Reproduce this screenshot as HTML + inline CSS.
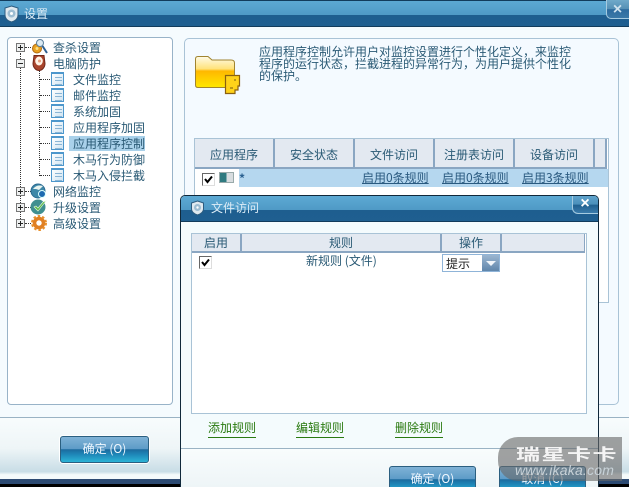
<!DOCTYPE html>
<html><head><meta charset="utf-8">
<style>
html,body{margin:0;padding:0;width:629px;height:487px;overflow:hidden;background:#000}
*{box-sizing:border-box}
body{position:relative;font:12px/14px "WenQuanYi Zen Hei","Noto Sans CJK SC",sans-serif;color:#2a5a75}
.a{position:absolute}
.t{position:absolute;white-space:nowrap;line-height:14px;font-size:12px}
.title{background:linear-gradient(#5ca9d3 0,#4f9ac6 55%,#1e5e8f 56%,#1f5f90 100%)}
.ic{position:absolute;width:13px;height:14px;background:linear-gradient(135deg,#fff,#cfe4f2);border:1px solid #4d97cc;border-top-width:2px}
.ic:after{content:"";position:absolute;left:3px;top:3px;width:7px;height:6px;border-top:1px solid #8ab5d5;border-bottom:1px solid #8ab5d5;background:linear-gradient(transparent 2px,#8ab5d5 2px,#8ab5d5 3px,transparent 3px)}
.pm{position:absolute;left:16px;width:9px;height:9px;border:1px solid #777;background:#eef0f0}
.pm:before{content:"";position:absolute;left:1px;top:3px;width:5px;height:1px;background:#222}
.pm.p:after{content:"";position:absolute;left:3px;top:1px;width:1px;height:5px;background:#222}
.dh{position:absolute;height:0;border-top:1px dotted #333}
.dv{position:absolute;width:0;border-left:1px dotted #333}
.h{position:absolute;height:29px;border-right:2px solid #8aa6c2;text-align:center;line-height:31px;font-size:12px}
.btn{position:absolute;border:1px solid #2b5f80;border-radius:3px;color:#f0f8ff;text-align:center;line-height:24px;font-size:12px;background:linear-gradient(#7fb2d6 0,#5d9bc7 48%,#1b6a9e 50%,#1e87b8 70%,#2db4d6 100%);box-shadow:0 0 0 1px #fff}
.lk{text-decoration:underline;color:#2a5a80}
.gr{position:absolute;color:#2a7a10;border-bottom:1px solid #2a7a10;height:18px;white-space:nowrap;line-height:15px}
.x{position:absolute;color:#fff;font:bold 16px/14px "Liberation Sans",sans-serif;text-align:center}
.cb{position:absolute;width:13px;height:13px;border:1px solid #666;border-right-color:#ddd;border-bottom-color:#ddd;background:#fff}
</style></head><body>

<!-- main window -->
<div class="a" style="left:0;top:0;width:629px;height:479px;background:#f5fbfe"></div>
<div class="a title" style="left:0;top:0;width:629px;height:27px;border-top:1px solid #123c5c;border-bottom:1px solid #123c5c"></div>
<svg class="a" style="left:3px;top:5px" width="17" height="18" viewBox="0 0 17 18"><path d="M8.500 1L15 3v7c0 4-3 6-6.500 7C5 16 2 14 2 10V3z" fill="#dfe9ef" stroke="#2c5c80"/><circle cx="8.500" cy="8.500" r="4" fill="#9dbdd2"/><circle cx="8.500" cy="8.500" r="1.500" fill="#fff"/></svg>
<div class="t" style="left:24px;top:7px;color:#dcecf6">设置</div>
<div class="a" style="left:606px;top:0;width:23px;height:19px;background:linear-gradient(#6fa9c9 0,#5590b5 50%,#2d6b9e 52%,#3b79a8 100%);border-left:1px solid #a5cbe0;border-bottom:1px solid #a5cbe0;border-bottom-left-radius:5px"></div>
<div class="x" style="left:606px;top:3px;width:23px;color:#cfe2ee">×</div>

<!-- tree panel -->
<div class="a" style="left:7px;top:37px;width:166px;height:368px;background:#fff;border:1px solid #98b3c8;border-radius:4px"></div>
<div class="dv" style="left:20px;top:53px;height:170px"></div>
<div class="dv" style="left:39px;top:70px;height:106px"></div>
<div class="dh" style="left:25px;top:47px;width:6px"></div>
<div class="dh" style="left:25px;top:191px;width:6px"></div>
<div class="dh" style="left:25px;top:207px;width:6px"></div>
<div class="dh" style="left:25px;top:223px;width:6px"></div>
<div class="dh" style="left:40px;top:79px;width:10px"></div>
<div class="dh" style="left:40px;top:95px;width:10px"></div>
<div class="dh" style="left:40px;top:111px;width:10px"></div>
<div class="dh" style="left:40px;top:127px;width:10px"></div>
<div class="dh" style="left:40px;top:143px;width:10px"></div>
<div class="dh" style="left:40px;top:159px;width:10px"></div>
<div class="dh" style="left:40px;top:175px;width:10px"></div>
<div class="pm p" style="top:43px"></div>
<div class="pm" style="top:59px"></div>
<div class="pm p" style="top:187px"></div>
<div class="pm p" style="top:203px"></div>
<div class="pm p" style="top:219px"></div>

<svg class="a" style="left:30px;top:38px" width="18" height="17" viewBox="0 0 18 17"><circle cx="7" cy="10.500" r="4.500" fill="#e8a020" stroke="#b06a10"/><circle cx="7" cy="10.500" r="1.500" fill="#ffe080"/><circle cx="10" cy="5" r="3.500" fill="#dceaf2" stroke="#5b7f9c"/><path d="M12.500 8l4.500 7" stroke="#2d5f90" stroke-width="2"/></svg>
<svg class="a" style="left:31px;top:54px" width="16" height="18" viewBox="0 0 16 18"><path d="M3 1.500h10l1 8c0 4-3 7-6 7s-6-3-6-7z" fill="#a8442c" stroke="#70281a"/><ellipse cx="8" cy="7" rx="3.800" ry="4.500" fill="#fff3e6"/><circle cx="8.500" cy="7" r="1.500" fill="#e8a080"/></svg>
<svg class="a" style="left:30px;top:182px" width="18" height="18" viewBox="0 0 18 18"><circle cx="8" cy="9" r="7" fill="#3f88a8" stroke="#2a6a90"/><path d="M3 7c3-4 7-4 10-3l-4 4-3-1z" fill="#e8f4f0"/><circle cx="12" cy="12" r="3.500" fill="#1e6ab0" stroke="#dff"/></svg>
<svg class="a" style="left:30px;top:198px" width="18" height="18" viewBox="0 0 18 18"><circle cx="8" cy="9" r="7.500" fill="#3f8f90"/><path d="M4 9l4 4 8-10-3 1-5 6-2-2z" fill="#58b848" stroke="#e8f8e0" stroke-width=".6"/></svg>
<svg class="a" style="left:31px;top:214px" width="17" height="18" viewBox="0 0 17 18"><circle cx="8" cy="9" r="4.500" fill="none" stroke="#e08024" stroke-width="3.600"/><circle cx="8" cy="9" r="7" fill="none" stroke="#e8902c" stroke-width="2" stroke-dasharray="2.500 2"/></svg>

<div class="ic" style="left:51px;top:72px"></div>
<div class="ic" style="left:51px;top:88px"></div>
<div class="ic" style="left:51px;top:104px"></div>
<div class="ic" style="left:51px;top:120px"></div>
<div class="ic" style="left:51px;top:136px"></div>
<div class="ic" style="left:51px;top:152px"></div>
<div class="ic" style="left:51px;top:168px"></div>

<div class="t" style="left:53px;top:41px">查杀设置</div>
<div class="t" style="left:53px;top:57px">电脑防护</div>
<div class="t" style="left:73px;top:73px">文件监控</div>
<div class="t" style="left:73px;top:89px">邮件监控</div>
<div class="t" style="left:73px;top:105px">系统加固</div>
<div class="t" style="left:73px;top:121px">应用程序加固</div>
<div class="a" style="left:69px;top:136px;width:76px;height:15px;background:#a9d1ea"></div>
<div class="t" style="left:73px;top:137px">应用程序控制</div>
<div class="t" style="left:73px;top:153px">木马行为防御</div>
<div class="t" style="left:73px;top:169px">木马入侵拦截</div>
<div class="t" style="left:53px;top:185px">网络监控</div>
<div class="t" style="left:53px;top:201px">升级设置</div>
<div class="t" style="left:53px;top:217px">高级设置</div>

<!-- right panel -->
<div class="a" style="left:184px;top:38px;width:435px;height:367px;background:#f4faff;border:1px solid #a9c3d6;border-radius:5px"></div>
<svg class="a" style="left:194px;top:55px" width="48" height="41" viewBox="0 0 48 41"><defs><linearGradient id="f" x1="0" y1="0" x2="0" y2="1"><stop offset="0" stop-color="#fffbe8"/><stop offset=".4" stop-color="#ffe27a"/><stop offset=".47" stop-color="#ffb800"/><stop offset="1" stop-color="#ffe800"/></linearGradient></defs><path d="M1.500 4Q1.500 1.500 4 1.500H14L18 5H37Q40.500 5 40.500 8V31Q40.500 32.500 38 32.500H4Q1.500 32.500 1.500 30z" fill="url(#f)" stroke="#a08430"/><path d="M31.500 20.500H45.500V31H44V35H41V38.500H31.500z" fill="#ffd21a" stroke="#8a6010" stroke-width="1.200"/><path d="M40 25h2M36 33h3" stroke="#7a5a10"/></svg>
<div class="t" style="left:259px;top:46px;line-height:12px;color:#2a5a75;white-space:nowrap">应用程序控制允许用户对监控设置进行个性化定义，来监控<br>程序的运行状态，拦截进程的异常行为，为用户提供个性化<br>的保护。</div>

<!-- table -->
<div class="a" style="left:194px;top:138px;width:415px;height:165px;background:#fff;border:1px solid #a9c3d6"></div>
<div class="a" style="left:195px;top:139px;width:412px;height:30px;background:#e3e9f1;border-bottom:2px solid #8aa6c2;border-right:2px solid #8aa6c2"></div>
<div class="h" style="left:195px;top:139px;width:80px">应用程序</div>
<div class="h" style="left:275px;top:139px;width:80px">安全状态</div>
<div class="h" style="left:355px;top:139px;width:80px">文件访问</div>
<div class="h" style="left:435px;top:139px;width:80px">注册表访问</div>
<div class="h" style="left:515px;top:139px;width:80px">设备访问</div>
<div class="a" style="left:239px;top:169px;width:369px;height:18px;background:#b5d7ef"></div>
<div class="cb" style="left:202px;top:173px"><svg style="position:absolute;left:0;top:0" width="11" height="11" viewBox="0 0 11 11"><path d="M2 5l2.500 3L9 2.500" fill="none" stroke="#000" stroke-width="2"/></svg></div>
<div class="a" style="left:219px;top:172px;width:15px;height:11px;background:linear-gradient(90deg,#2f7a80 50%,#d8dde0 50%);border:1px solid #9aa"></div>
<div class="t" style="left:239px;top:172px;color:#2a6090;font-weight:bold">*</div>
<div class="t lk" style="left:362px;top:171px">启用0条规则</div>
<div class="t lk" style="left:442px;top:171px">启用0条规则</div>
<div class="t lk" style="left:522px;top:171px">启用3条规则</div>

<!-- main footer -->
<div class="a" style="left:0;top:417px;width:629px;height:62px;border-top:1px solid #9ab3c4;background:linear-gradient(#f8fcfd 0,#eef5f7 50%,#c8dde6 88%,#f4fafb 93%,#f4fafb 100%)"></div>
<div class="a" style="left:0;top:479px;width:629px;height:5px;background:#2c4a72"></div>
<div class="a" style="left:0;top:484px;width:629px;height:3px;background:#000"></div>
<div class="btn" style="left:60px;top:436px;width:89px;height:27px">确定 (O)</div>

<!-- dialog -->
<div class="a" style="left:180px;top:195px;width:419px;height:292px;background:#f4fbfd;border:1px solid #10283a;border-bottom:0;border-radius:5px 5px 0 0"></div>
<div class="a title" style="left:181px;top:196px;width:417px;height:26px;border-bottom:1px solid #123c5c;border-radius:4px 4px 0 0"></div>
<svg class="a" style="left:190px;top:200px" width="15" height="16" viewBox="0 0 15 16"><path d="M7.500 1L13.500 3v6c0 3.500-3 5-6 6C4.500 14 1.500 12.500 1.500 9V3z" fill="#dfe9ef" stroke="#2c5c80"/><circle cx="7.500" cy="7.500" r="3.500" fill="#9dbdd2"/><circle cx="7.500" cy="7.500" r="1.200" fill="#fff"/></svg>
<div class="t" style="left:211px;top:201px;color:#dcecf6">文件访问</div>
<div class="a" style="left:572px;top:196px;width:26px;height:18px;background:linear-gradient(#5fa3cc 0,#4a8fba 50%,#20608f 52%,#3a7bab 100%);border-left:1px solid #a5cbe0;border-bottom:1px solid #a5cbe0;border-radius:0 4px 0 6px"></div>
<div class="x" style="left:572px;top:197px;width:26px">×</div>

<div class="a" style="left:191px;top:233px;width:396px;height:181px;background:#fff;border:1px solid #a9c3d6"></div>
<div class="a" style="left:192px;top:234px;width:393px;height:19px;background:#e3e9f1;border-bottom:2px solid #8aa6c2;border-right:1px solid #8aa6c2"></div>
<div class="h" style="left:192px;top:234px;width:50px;height:18px;line-height:18px">启用</div>
<div class="h" style="left:242px;top:234px;width:200px;height:18px;line-height:18px">规则</div>
<div class="h" style="left:442px;top:234px;width:60px;height:18px;line-height:18px">操作</div>
<div class="cb" style="left:199px;top:256px"><svg style="position:absolute;left:0;top:0" width="11" height="11" viewBox="0 0 11 11"><path d="M2 5l2.500 3L9 2.500" fill="none" stroke="#000" stroke-width="2"/></svg></div>
<div class="t" style="left:306px;top:254px">新规则 (文件)</div>
<div class="a" style="left:442px;top:254px;width:58px;height:18px;background:#fff;border:1px solid #8fb4d8"></div>
<div class="t" style="left:446px;top:257px;color:#222">提示</div>
<div class="a" style="left:482px;top:255px;width:17px;height:16px;background:linear-gradient(#9bb5d0,#5f85ab)"></div>
<div class="a" style="left:486px;top:261px;width:0;height:0;border-left:5px solid transparent;border-right:5px solid transparent;border-top:5px solid #f0f5fa"></div>

<div class="gr" style="left:208px;top:420px">添加规则</div>
<div class="gr" style="left:296px;top:420px">编辑规则</div>
<div class="gr" style="left:395px;top:420px">删除规则</div>

<div class="a" style="left:181px;top:448px;width:417px;height:39px;border-top:1px solid #9ab3c4;background:linear-gradient(#f8fcfd,#eef5f7)"></div>
<div class="btn" style="left:389px;top:466px;width:87px;height:27px;box-shadow:none">确定 (O)</div>
<div class="btn" style="left:499px;top:466px;width:87px;height:27px;box-shadow:none">取消 (C)</div>

<!-- watermark -->
<div class="a" style="left:498px;top:437px;width:124px;height:44px;background:rgba(105,105,105,.62);border-radius:20px 0 0 20px"></div>
<div class="t" style="left:516px;top:445px;font-size:16px;line-height:16px;font-weight:bold;color:#f4f4f4;letter-spacing:1px;transform:scaleX(1.5);transform-origin:0 0">瑞星卡卡</div>
<div class="t" style="left:515px;top:462px;font:italic 14px/16px 'Liberation Sans',sans-serif;color:#c8d2d8;letter-spacing:.2px">www.ikaka.com</div>
</body></html>
